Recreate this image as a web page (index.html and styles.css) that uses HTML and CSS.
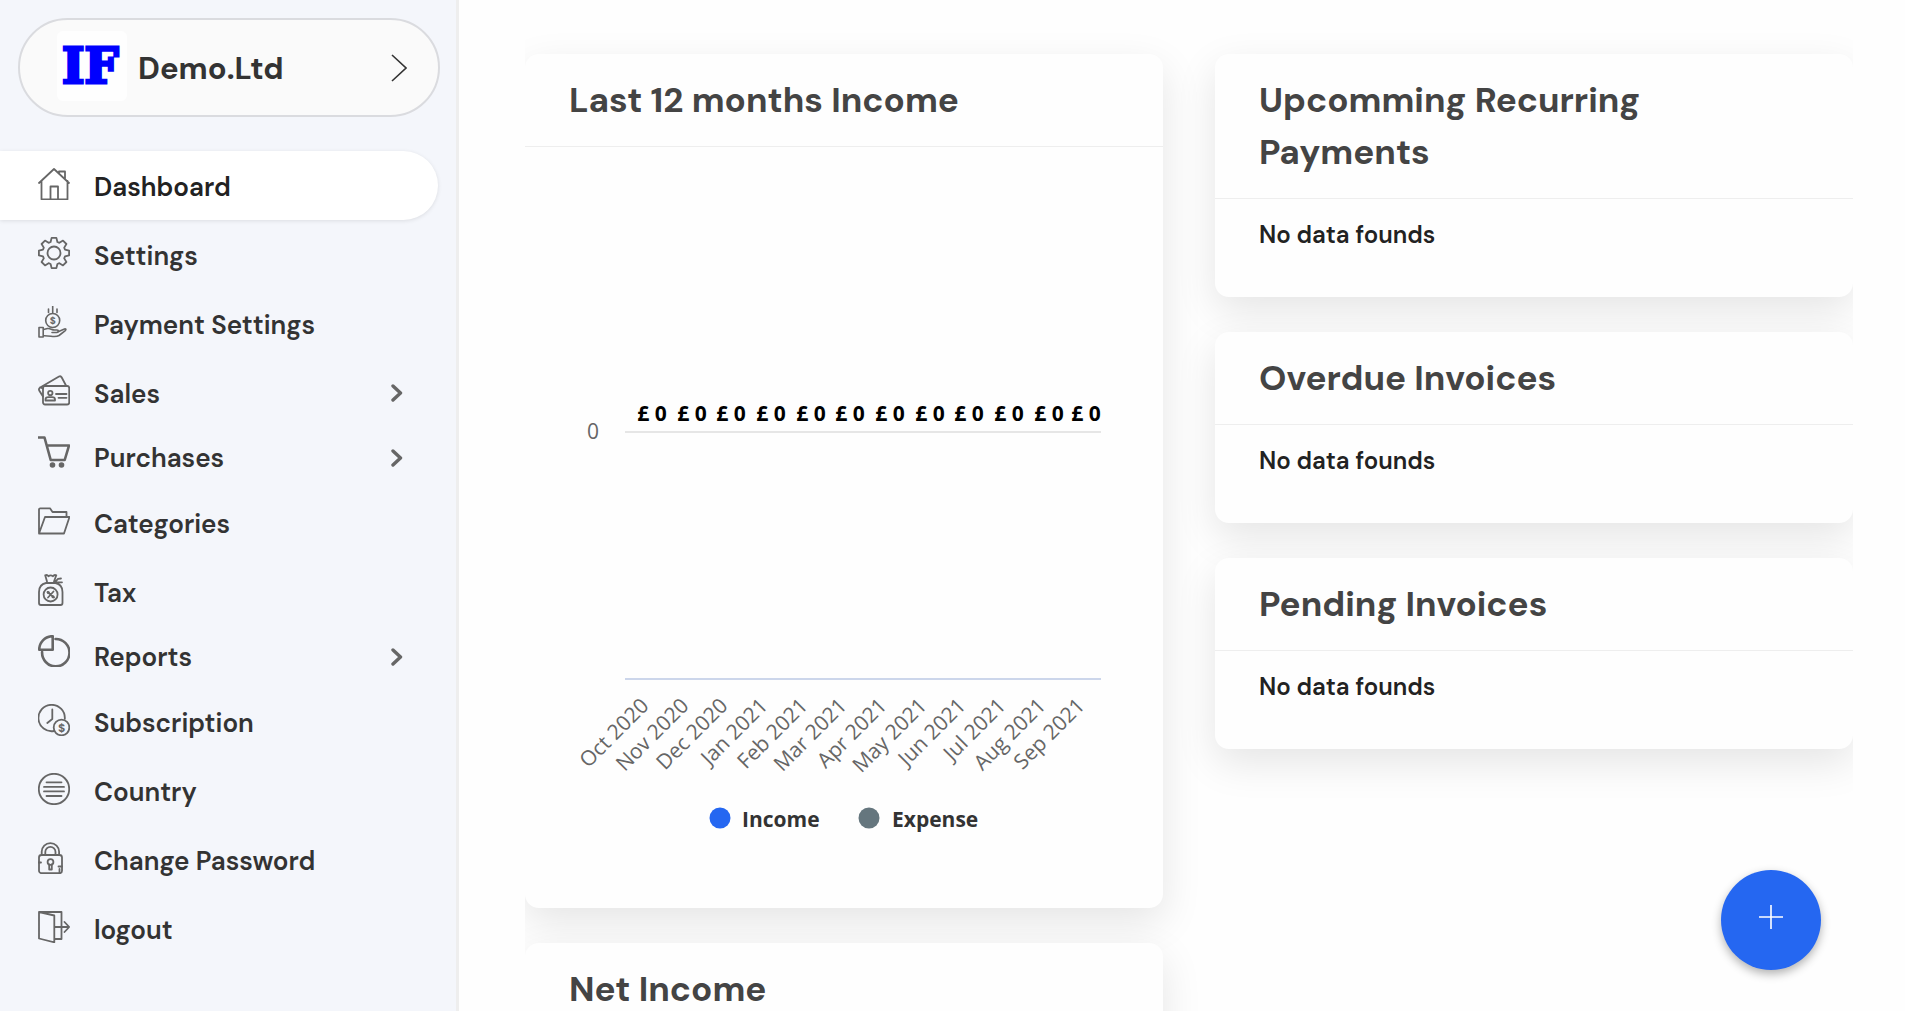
FILE: index.html
```html
<!DOCTYPE html>
<html lang="en">
  <head>
    <meta charset="UTF-8" />
    <meta name="viewport" content="width=device-width, initial-scale=1.0" />
    <title>Dashboard</title>
    <link rel="stylesheet" href="styles.css">
  </head>
  <body>
    <div class="layout">
      <aside class="sidebar">
        <button type="button" class="company">
          <svg class="company-logo" viewBox="0 0 70 70" role="img" aria-label="IF">
            <text x="5" y="52">IF</text>
          </svg>
          <span class="company-name">Demo.Ltd</span>
          <svg class="company-arrow" viewBox="0 0 16 28" aria-hidden="true"><path d="M1 1l14 13L1 27" /></svg>
        </button>

        <nav class="menu">
          <a href="#" class="menu-item active">
            <svg class="menu-icon" viewBox="0 0 32 32" aria-hidden="true">
              <path d="M1 15L16 1l15 14M3.5 13v18.300h26V13M12.500 31V18.500h7.500V31M21 5V3.500h6V11" />
            </svg>
            <span>Dashboard</span>
          </a>
          <a href="#" class="menu-item">
            <svg class="menu-icon" viewBox="0 0 32 32" aria-hidden="true">
              <path d="M12.600 5L13.600.9h4.800L19.400 5l2 .8L25 3.600 28.400 7l-2.200 3.600.8 2 4.100 1v4.800l-4.100 1-.8 2 2.200 3.600-3.400 3.400-3.600-2.200-2 .8-1 4.100h-4.800l-1-4.100-2-.8L7 28.400 3.600 25l2.200-3.600-.8-2-4.100-1v-4.800l4.100-1 .8-2L3.600 7 7 3.600l3.600 2.200z" />
              <circle cx="16" cy="16" r="6.500" />
            </svg>
            <span>Settings</span>
          </a>
          <a href="#" class="menu-item">
            <svg class="menu-icon thin" viewBox="0 0 32 32" aria-hidden="true">
              <path d="M10.500 3v3.500M14.700 0v6.500M19 3v3.500" />
              <circle cx="14.700" cy="14.500" r="7" />
              <text x="14.700" y="18.300" text-anchor="middle">$</text>
              <path d="M1 21.500h4.200V31H1zM5.500 23.500l4-1c3-.5 4 1.500 7 1.500h2.500c2 0 2 2.500 0 2.500h-5M19.500 26l7-3c1.800-.5 1.800.7.500 1.800l-6 4.700c-4 2.500-8 0-15.500.3" />
            </svg>
            <span>Payment Settings</span>
          </a>
          <a href="#" class="menu-item">
            <svg class="menu-icon" viewBox="0 0 32 32" aria-hidden="true">
              <rect x="5" y="11" width="26.200" height="18.500" rx="2" />
              <path d="M5 21.500L1.200 15.500q-.8-2 1-3L21 1.500q1.800-.8 2.600.8L28 10.500M2 12.500l3 1" />
              <circle cx="12.300" cy="18" r="2.200" />
              <path d="M7.500 25.500v-1q0-2.300 3-2.300h3.500q3 0 3 2.300v1zM18 19h10.500M20.500 22.800h8" />
            </svg>
            <span>Sales</span>
            <svg class="menu-arrow" viewBox="0 0 12 18" aria-hidden="true"><path d="M2 2l7.500 7L2 16" /></svg>
          </a>
          <a href="#" class="menu-item compact">
            <svg class="menu-icon bold" viewBox="0 0 32 32" aria-hidden="true">
              <path d="M0 1.500h6.500L12.700 24h14L31 9.500H9" />
              <circle class="dot" cx="14.500" cy="29" r="2.800" />
              <circle class="dot" cx="23.500" cy="29" r="2.800" />
            </svg>
            <span>Purchases</span>
            <svg class="menu-arrow" viewBox="0 0 12 18" aria-hidden="true"><path d="M2 2l7.500 7L2 16" /></svg>
          </a>
          <a href="#" class="menu-item">
            <svg class="menu-icon" viewBox="0 0 32 32" aria-hidden="true">
              <path d="M1 28V4.500q0-1.200 1.200-1.200H12L14.500 7h14v4.500M1 28.500l6-16.500h24.500L26 28.500z" />
            </svg>
            <span>Categories</span>
          </a>
          <a href="#" class="menu-item">
            <svg class="menu-icon" viewBox="0 0 32 32" aria-hidden="true">
              <path d="M8 9C3 10 1 14 1 18v11q0 2 2 2h19.500q2 0 2-2V18c0-4-2-8-7-9zM9 7.500L7.200 1.300q2-1 3.300.9 2-1.500 4.500 0 1.300-1.900 3.300-.9L16 7.500M17 8l3-3.200 3-.3M18 8.300h6" />
              <circle cx="12.600" cy="20.500" r="7" />
              <path d="M9.500 18l6.500 5.500M10 23.500l5.500-6" />
              <circle class="dot" cx="10.300" cy="18.500" r="1.500" />
              <circle class="dot" cx="15" cy="22.800" r="1.500" />
            </svg>
            <span>Tax</span>
          </a>
          <a href="#" class="menu-item compact">
            <svg class="menu-icon bold" viewBox="0 0 32 32" aria-hidden="true">
              <path d="M14.700 14.700V1.200A13.500 13.500 0 0 0 1.200 14.700zM17.500 4a13.700 13.700 0 1 1-13.400 13" />
            </svg>
            <span>Reports</span>
            <svg class="menu-arrow" viewBox="0 0 12 18" aria-hidden="true"><path d="M2 2l7.500 7L2 16" /></svg>
          </a>
          <a href="#" class="menu-item">
            <svg class="menu-icon" viewBox="0 0 32 32" aria-hidden="true">
              <path d="M26.800 15A13.200 13.200 0 1 0 16 27M14.300 5.500V15l-5 4" />
              <circle cx="23.500" cy="23.500" r="7.800" />
              <text x="23.500" y="28" text-anchor="middle" class="large">$</text>
            </svg>
            <span>Subscription</span>
          </a>
          <a href="#" class="menu-item">
            <svg class="menu-icon" viewBox="0 0 32 32" aria-hidden="true">
              <circle cx="16" cy="16" r="15.200" />
              <path d="M8.500 9.300h15M6 13.900h20M6 18.400h20M8.500 23h15" />
            </svg>
            <span>Country</span>
          </a>
          <a href="#" class="menu-item">
            <svg class="menu-icon" viewBox="0 0 32 32" aria-hidden="true">
              <rect x="1" y="13" width="23" height="18.200" rx="2.500" />
              <path d="M3.700 13V9.800a8.700 8.700 0 0 1 17.400 0V13M7.300 13v-3a5.100 5.100 0 0 1 10.200 0v3M11.200 22.500v5h2.600v-5M0 20.500h3M20.500 24.500h3.500M21.500 27v4" />
              <circle cx="12.500" cy="20" r="2.900" />
            </svg>
            <span>Change Password</span>
          </a>
          <a href="#" class="menu-item">
            <svg class="menu-icon" viewBox="0 0 32 32" aria-hidden="true">
              <path d="M1 1l15.300 3.500v26.800L1 27.500zM1 1h22.500v27H16.500M16.500 16H31M26.500 11l4.700 5-4.700 5" />
            </svg>
            <span>logout</span>
          </a>
        </nav>
      </aside>

      <main class="content">
        <div class="cards">
          <div class="cards-column">
            <section class="card">
              <h2 class="card-title">Last 12 months Income</h2>
              <svg class="chart" viewBox="0 0 638 761" role="img" aria-label="Last 12 months income and expense">
                <path class="grid-line" d="M100 285H576" />
                <path class="axis-line" d="M100 532H576" />
                <text class="axis-label" x="74" y="292" text-anchor="end">0</text>
                <g class="value-labels"></g>
                <g class="month-labels"></g>
                <circle class="income" cx="195" cy="671" r="10.500" />
                <text class="legend-label" x="217" y="680">Income</text>
                <circle class="expense" cx="344" cy="671" r="10.500" />
                <text class="legend-label" x="367" y="680">Expense</text>
              </svg>
            </section>
            <section class="card">
              <h2 class="card-title">Net Income</h2>
              <div class="card-body"></div>
            </section>
          </div>

          <div class="cards-column">
            <section class="card">
              <h2 class="card-title">Upcomming Recurring Payments</h2>
              <div class="card-body">No data founds</div>
            </section>
            <section class="card">
              <h2 class="card-title">Overdue Invoices</h2>
              <div class="card-body">No data founds</div>
            </section>
            <section class="card">
              <h2 class="card-title">Pending Invoices</h2>
              <div class="card-body">No data founds</div>
            </section>
          </div>
        </div>
      </main>
    </div>

    <button type="button" class="add-btn" aria-label="Add">
      <svg viewBox="0 0 24 24" aria-hidden="true"><path d="M12 0v24M0 12h24" /></svg>
    </button>

    <script src="script.js"></script>
  </body>
</html>
```
FILE: styles.css
```css
* {
  box-sizing: border-box;
}

body {
  margin: 0;
  background-color: #fefefe;
  color: #222;
  font-family: "DM Sans", Inter, sans-serif;
}

.layout {
  display: flex;
  height: 100vh;
}

/* sidebar */
.sidebar {
  flex: 0 0 459px;
  padding: 18px 18px 18px 0;
  background-color: #f4f6fb;
  border-right: 3px solid #eee;
  overflow: hidden;
}

.company {
  display: flex;
  align-items: center;
  width: 422px;
  height: 99px;
  margin: 0 0 34px 18px;
  padding: 0 31px 4px 37px;
  background-color: #fafafa;
  border: 2px solid #dadbdf;
  border-radius: 50px;
  color: #333;
  font-family: inherit;
  cursor: pointer;
}

.company-logo {
  width: 70px;
  height: 70px;
  background-color: #fefefe;
  border-radius: 6px;
}

.company-logo text {
  fill: #0000fe;
  stroke: #0000fe;
  stroke-width: 3px;
  font-family: "DejaVu Serif", serif;
  font-size: 48px;
  font-weight: bold;
}

.company-name {
  margin: 6px auto 0 11px;
  font-size: 31px;
  font-weight: 700;
}

.company-arrow {
  width: 16px;
  height: 28px;
  margin-top: 4px;
  fill: none;
  stroke: #333;
  stroke-width: 1.6;
}

.menu-item {
  display: flex;
  align-items: center;
  height: 69px;
  padding: 0 35px 0 38px;
  border-radius: 0 35px 35px 0;
  color: #333;
  font-size: 26px;
  font-weight: 600;
  text-decoration: none;
}

.menu-item span {
  flex: 1;
  padding-top: 2px;
}

.menu-item.active {
  background-color: #fff;
  box-shadow: 0 1px 4px rgba(0, 0, 0, 0.1);
  color: #222;
}

.menu-item.compact {
  height: 61px;
}

.menu-item.compact span {
  padding-top: 0;
}

.menu-icon {
  width: 32px;
  height: 32px;
  margin: 0 24px 4px 0;
  fill: none;
  stroke: #666;
  stroke-width: 1.8;
  stroke-linecap: round;
  stroke-linejoin: round;
}

.menu-icon.thin {
  stroke-width: 1.6;
}

.menu-icon.bold {
  stroke-width: 2.6;
}

.menu-icon .dot,
.menu-icon text {
  fill: #666;
  stroke: none;
}

.menu-icon text {
  font-size: 10px;
  font-weight: 700;
}

.menu-icon text.large {
  font-size: 12px;
}

.compact .menu-icon {
  margin-bottom: 12px;
}

.menu-arrow {
  width: 12px;
  height: 18px;
  fill: none;
  stroke: #666;
  stroke-width: 3.4;
  stroke-linecap: round;
  stroke-linejoin: round;
}

/* content */
.content {
  flex: 1;
  min-width: 0;
  padding: 54px 52px 54px 66px;
  overflow-y: auto;
  scrollbar-width: none;
}

.cards {
  display: grid;
  grid-template-columns: 1fr 1fr;
  gap: 52px;
  overflow-x: clip;
}

.cards-column {
  display: flex;
  flex-direction: column;
  gap: 35px;
}

.card {
  background-color: #fefefe;
  border-radius: 14px;
  box-shadow: 0 14px 40px rgba(0, 0, 0, 0.1);
}

.card-title {
  margin: 0;
  padding: 20px 88px 20px 44px;
  border-bottom: 1px solid #eee;
  color: #444;
  font-size: 35px;
  font-weight: 700;
  line-height: 52px;
}

.card-body {
  min-height: 98px;
  padding: 20px 44px;
  font-size: 24px;
  font-weight: 600;
  line-height: 32px;
}

/* chart */
.chart {
  display: block;
  width: 100%;
  height: auto;
  font-family: "Lucida Grande", "Open Sans", sans-serif;
  font-size: 21px;
}

.grid-line {
  stroke: #e6e6e6;
  stroke-width: 2;
}

.axis-line {
  stroke: #ccd6eb;
  stroke-width: 2;
}

.axis-label,
.month-labels {
  fill: #666;
}

.value-labels {
  fill: #000;
  font-weight: 700;
}

.legend-label {
  fill: #333;
  font-weight: 700;
}

.income {
  fill: #2567f1;
}

.expense {
  fill: #65767e;
}

/* floating button */
.add-btn {
  position: fixed;
  right: 84px;
  bottom: 41px;
  width: 100px;
  height: 100px;
  padding: 0 0 4px;
  background-color: #2567f1;
  border: none;
  border-radius: 50%;
  box-shadow: 0 4px 10px rgba(0, 0, 0, 0.3);
  cursor: pointer;
}

.add-btn svg {
  width: 24px;
  height: 24px;
  stroke: #fff;
  stroke-width: 1.6;
}
```
FILE: script.js
```js
const months = [
  'Oct 2020', 'Nov 2020', 'Dec 2020', 'Jan 2021', 'Feb 2021', 'Mar 2021',
  'Apr 2021', 'May 2021', 'Jun 2021', 'Jul 2021', 'Aug 2021', 'Sep 2021'
];
const plotLeft = 100;
const plotRight = 576;
const step = (plotRight - plotLeft) / months.length;

function addText(group, text, attrs) {
  const el = document.createElementNS('http://www.w3.org/2000/svg', 'text');
  Object.keys(attrs).forEach((key) => el.setAttribute(key, attrs[key]));
  el.textContent = text;
  group.appendChild(el);
}

const valueLabels = document.querySelector('.value-labels');
const monthLabels = document.querySelector('.month-labels');

months.forEach((month, i) => {
  const center = Math.round(plotLeft + step * (i + 0.5));
  // keep the value label inside the plot area
  const valueX = Math.min(center + 7, plotRight - 15);
  addText(valueLabels, '£ 0', { x: valueX, y: 274, 'text-anchor': 'middle' });

  const x = center + 5;
  addText(monthLabels, month, {
    x: x,
    y: 560,
    'text-anchor': 'end',
    transform: `rotate(-45 ${x} 560)`
  });
});
```
